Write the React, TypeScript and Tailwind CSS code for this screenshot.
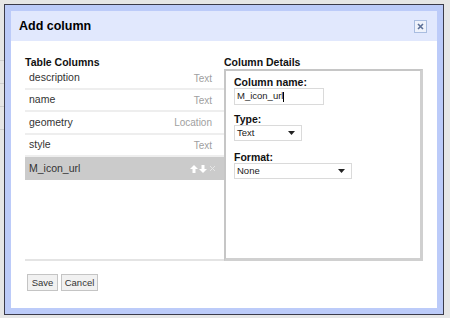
import React from 'react';

const rows: { name: string; type: string; h: string }[] = [
  { name: 'description', type: 'Text', h: 'h-[22px]' },
  { name: 'name', type: 'Text', h: 'h-[22px]' },
  { name: 'geometry', type: 'Location', h: 'h-[23px]' },
  { name: 'style', type: 'Text', h: 'h-[22px]' },
];

const Caret = () => (
  <svg width="7" height="4" viewBox="0 0 7 4" className="shrink-0">
    <path d="M0 0h7L3.5 4z" fill="#222" />
  </svg>
);

const App: React.FC = () => {
  return (
    <div className="relative w-[450px] h-[318px] overflow-hidden bg-[#e6e6e6] font-['Liberation_Sans',Arial,sans-serif]">
      {/* page behind the dialog */}
      <div className="absolute left-0 top-[60px] w-[4px] h-[258px] flex flex-col gap-[22px]">
        <div className="h-px bg-[#cfcfcf]" />
        <div className="h-px bg-[#cfcfcf]" />
        <div className="h-px bg-[#cfcfcf]" />
        <div className="h-px bg-[#cfcfcf]" />
      </div>

      {/* dialog */}
      <div className="absolute left-[4px] top-[4px] w-[440px] h-[311px] border border-[#3b3b4a] bg-[#bccbf9] p-[6px]">
        <div className="w-full h-full bg-white flex flex-col">
          <div className="h-[30px] shrink-0 bg-[#e1e8fd] flex items-center justify-between pl-[8px] pr-[10px]">
            <span className="text-[12.5px] font-bold text-black">Add column</span>
            <span className="w-[13px] h-[13px] border border-[#a9bde0] bg-[#eef2fb] flex items-center justify-center">
              <svg width="7" height="7" viewBox="0 0 7 7">
                <path d="M1 1l5 5M6 1L1 6" stroke="#5b6f96" strokeWidth="1.6" />
              </svg>
            </span>
          </div>

          <div className="flex pl-[14px] pt-[15px]">
            {/* left: table columns */}
            <div className="w-[199px] flex flex-col">
              <div className="text-[10.5px] font-bold text-[#111] h-[12px] leading-[12px]">Table Columns</div>
              <div className="h-[193px] border-b-2 border-[#e4e4e4] flex flex-col">
                {rows.map((r) => (
                  <div
                    key={r.name}
                    className={`${r.h} border-b-2 border-[#eeeeee] flex items-center justify-between pl-[4px] pr-[12px]`}
                  >
                    <span className="text-[10.5px] text-[#333]">{r.name}</span>
                    <span className="text-[10px] text-[#a0a0a0]">{r.type}</span>
                  </div>
                ))}
                <div className="h-[23px] bg-[#cbcbcb] flex items-center justify-between pl-[4px] pr-[8px]">
                  <span className="text-[10.5px] text-[#333]">M_icon_url</span>
                  <span className="flex items-center gap-[1px]">
                    <svg width="8" height="8" viewBox="0 0 8 8">
                      <path d="M4 0L8 4H5.5V8h-3V4H0z" fill="#fff" />
                    </svg>
                    <svg width="8" height="8" viewBox="0 0 8 8">
                      <path d="M4 8L0 4h2.5V0h3v4H8z" fill="#fff" />
                    </svg>
                    <svg width="7" height="7" viewBox="0 0 7 7" className="ml-[1px]">
                      <path d="M1 1l5 5M6 1L1 6" stroke="#e6e6e6" strokeWidth="1" />
                    </svg>
                  </span>
                </div>
              </div>
            </div>

            {/* right: column details */}
            <div className="w-[199px] flex flex-col">
              <div className="text-[10.5px] font-bold text-[#111] h-[13px] leading-[12px]">Column Details</div>
              <div className="h-[192px] border-t-2 border-l-2 border-[#c6c6c6] border-r-[3px] border-b-[3px] border-r-[#d0d0d0] border-b-[#d0d0d0] pl-[8px] pt-[5px]">
                <div className="text-[10.5px] font-bold text-[#111] leading-[12px]">Column name:</div>
                <div className="w-[90px] h-[17px] border border-[#dadada] flex items-center pl-[2px] text-[9.5px] text-[#222]">
                  M_icon_url<span className="w-px h-[10px] bg-black" />
                </div>
                <div className="text-[10.5px] font-bold text-[#111] leading-[12px] mt-[8px]">Type:</div>
                <div className="w-[68px] h-[16px] border border-[#dadada] flex items-center justify-between pl-[2px] pr-[6px] text-[9.5px] text-[#222]">
                  Text <Caret />
                </div>
                <div className="text-[10.5px] font-bold text-[#111] leading-[12px] mt-[10px]">Format:</div>
                <div className="w-[118px] h-[16px] border border-[#dadada] flex items-center justify-between pl-[2px] pr-[6px] text-[9.5px] text-[#222]">
                  None <Caret />
                </div>
              </div>
            </div>
          </div>

          <div className="flex gap-[3px] pl-[16px] pt-[13px]">
            <button className="w-[31px] h-[17px] border border-[#c4c4c4] bg-[#f1f1f1] text-[9.5px] text-[#333] leading-[15px]">Save</button>
            <button className="w-[37px] h-[17px] border border-[#c4c4c4] bg-[#f1f1f1] text-[9.5px] text-[#333] leading-[15px]">Cancel</button>
          </div>
        </div>
      </div>
    </div>
  );
};

export default App;
